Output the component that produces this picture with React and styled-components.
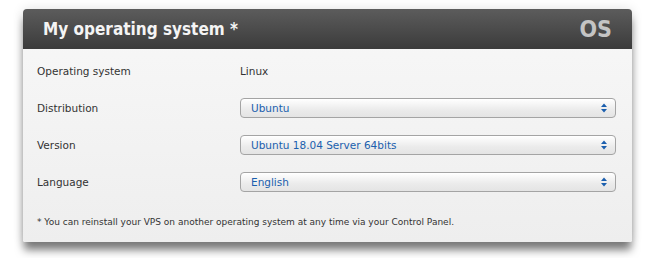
import React from 'react'
import styled, { createGlobalStyle } from 'styled-components'

const GlobalStyle = createGlobalStyle`
    body {
        margin: 0;
        background: #ffffff;
        font-family: "DejaVu Sans", Verdana, sans-serif;
    }
`

const Page = styled.div`
    min-height: 258px;
    box-sizing: border-box;
    padding: 9px 19px 17px 23px;
`

const Panel = styled.section`
    width: 609px;
    border-radius: 4px 4px 2px 2px;
    background: linear-gradient(#f8f8f8, #eeeeee);
    box-shadow: 0 9px 9px -1px rgba(0, 0, 0, 0.5), 0 0 12px rgba(0, 0, 0, 0.12);
`

const Header = styled.header`
    display: flex;
    align-items: center;
    justify-content: space-between;
    height: 40px;
    padding: 0 20px;
    border-radius: 4px 4px 0 0;
    background: linear-gradient(#5c5c5c, #3b3b3b);
`

const Title = styled.h1`
    margin: 0;
    font-family: "DejaVu Sans Condensed", "DejaVu Sans", sans-serif;
    font-size: 17px;
    font-weight: bold;
    color: #f4f4f4;
`

const Badge = styled.span`
    font-family: "DejaVu Sans Condensed", "DejaVu Sans", sans-serif;
    font-size: 23px;
    font-weight: bold;
    color: #c4c4c4;
`

const Body = styled.div`
    padding: 12px 16px 15px 14px;
`

const Fields = styled.div`
    display: grid;
    grid-template-columns: 203px 1fr;
    grid-auto-rows: 20px;
    row-gap: 17px;
    align-items: center;
    font-size: 10.5px;
    color: #333333;
`

const Label = styled.div``

const Value = styled.div``

const Select = styled.div`
    display: flex;
    align-items: center;
    justify-content: space-between;
    height: 18px;
    padding: 0 8px 0 10px;
    border: 1px solid #a4a4a4;
    border-radius: 4px;
    background: linear-gradient(#ffffff, #ebebeb 60%, #e4e4e4);
    box-shadow: inset 0 1px 0 #ffffff;
    color: #1b5fae;
`

const Note = styled.p`
    margin: 25px 0 0;
    font-size: 9px;
    color: #333333;
`

function Arrows() {
    return (
        <svg width="6" height="10" viewBox="0 0 6 10">
            <path d="M3 0.5 L6 4 L0 4 Z" fill="#1b5fae" />
            <path d="M0 6 L6 6 L3 9.5 Z" fill="#1b5fae" />
        </svg>
    )
}

function Dropdown({ children }) {
    return (
        <Select>
            <span>{children}</span>
            <Arrows />
        </Select>
    )
}

function App() {
    return (
        <Page>
            <GlobalStyle />
            <Panel>
                <Header>
                    <Title>My operating system *</Title>
                    <Badge>OS</Badge>
                </Header>
                <Body>
                    <Fields>
                        <Label>Operating system</Label>
                        <Value>Linux</Value>
                        <Label>Distribution</Label>
                        <Dropdown>Ubuntu</Dropdown>
                        <Label>Version</Label>
                        <Dropdown>Ubuntu 18.04 Server 64bits</Dropdown>
                        <Label>Language</Label>
                        <Dropdown>English</Dropdown>
                    </Fields>
                    <Note>
                        * You can reinstall your VPS on another operating system at any time via
                        your Control Panel.
                    </Note>
                </Body>
            </Panel>
        </Page>
    )
}

export default App
